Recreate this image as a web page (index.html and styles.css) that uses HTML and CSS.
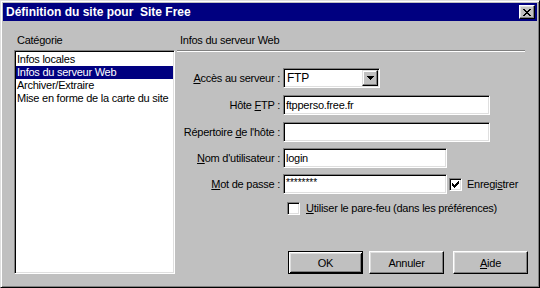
FILE: index.html
```html
<!DOCTYPE html>
<html lang="fr">
<head>
<meta charset="utf-8">
<title>Définition du site</title>
<link rel="stylesheet" href="styles.css">
</head>
<body>
<div class="window">
  <div class="titlebar">
    <span class="title">Définition du site pour  Site Free</span>
    <div class="close">
      <svg width="8" height="7" viewBox="0 0 8 7" shape-rendering="crispEdges"><path fill="#000" d="M0 0h2v1H0zM6 0h2v1H6zM1 1h2v1H1zM5 1h2v1H5zM2 2h4v1H2zM3 3h2v1H3zM2 4h4v1H2zM1 5h2v1H1zM5 5h2v1H5zM0 6h2v1H0zM6 6h2v1H6z"/></svg>
    </div>
  </div>
  <div class="content">
    <div class="left">
      <div class="caption">Catégorie</div>
      <ul class="list">
        <li>Infos locales</li>
        <li class="sel">Infos du serveur Web</li>
        <li>Archiver/Extraire</li>
        <li>Mise en forme de la carte du site</li>
      </ul>
    </div>
    <div class="right">
      <div class="caption">Infos du serveur Web</div>
      <div class="sep"></div>
      <div class="form">
        <div class="lbl"><u>A</u>ccès au serveur :</div>
        <div class="select"><span class="seltext">FTP</span><div class="drop"><svg width="7" height="4" viewBox="0 0 7 4" shape-rendering="crispEdges"><path fill="#000" d="M0 0h7v1H0zM1 1h5v1H1zM2 2h3v1H2zM3 3h1v1H3z"/></svg></div></div>

        <div class="lbl">Hôte <u>F</u>TP :</div>
        <div class="field w-long">ftpperso.free.fr</div>

        <div class="lbl">Répertoire <u>d</u>e l'hôte :</div>
        <div class="field w-long"></div>

        <div class="lbl"><u>N</u>om d'utilisateur :</div>
        <div class="field w-mid">login</div>

        <div class="lbl"><u>M</u>ot de passe :</div>
        <div class="inline">
          <div class="field w-mid pw">********</div>
          <div class="cb cb-save"><svg width="7" height="7" viewBox="0 0 7 7" shape-rendering="crispEdges"><path fill="#000" d="M6 0h1v1H6zM5 1h2v1H5zM0 2h1v1H0zM4 2h3v1H4zM0 3h2v1H0zM3 3h3v1H3zM0 4h5v1H0zM1 5h3v1H1zM2 6h1v1H2z"/></svg></div>
          <span class="cblabel">Enregi<u>s</u>trer</span>
        </div>

        <div></div>
        <div class="inline">
          <div class="cb cb-fw"></div>
          <span class="cblabel fw"><u>U</u>tiliser le pare-feu (dans les préférences)</span>
        </div>
      </div>
      <div class="buttons">
        <div class="btn default">OK</div>
        <div class="btn b-cancel">Annuler</div>
        <div class="btn b-help"><u>A</u>ide</div>
      </div>
    </div>
  </div>
</div>
</body>
</html>
```
FILE: styles.css
```css
html, body {
  margin: 0;
  padding: 0;
  background: #c0c0c0;
}

.window {
  width: 540px;
  height: 288px;
  box-sizing: border-box;
  background: #c0c0c0;
  border: 1px solid;
  border-color: #dfdfdf #000 #000 #dfdfdf;
  box-shadow: inset 1px 1px #fff, inset -1px -1px #808080;
  padding: 2px;
  display: flex;
  flex-direction: column;
  font-family: "Liberation Sans", Arial, sans-serif;
  font-size: 11px;
  letter-spacing: -0.25px;
  color: #000;
}

.titlebar {
  height: 18px;
  background: #000080;
  display: flex;
  align-items: flex-start;
  flex: none;
}

.title {
  flex: 1;
  color: #fff;
  font-weight: bold;
  font-size: 12px;
  letter-spacing: 0;
  line-height: 18px;
  padding-left: 3px;
  white-space: pre;
}

.close {
  width: 16px;
  height: 14px;
  margin: 2px 2px 0 0;
  box-sizing: border-box;
  background: #c0c0c0;
  border: 1px solid;
  border-color: #fff #000 #000 #fff;
  box-shadow: inset -1px -1px #808080, inset 1px 1px #dfdfdf;
  display: flex;
  align-items: center;
  justify-content: center;
}

.content {
  flex: 1;
  display: flex;
  padding: 13px 0 0 11px;
}

.left {
  width: 161px;
  display: flex;
  flex-direction: column;
}

.caption {
  height: 13px;
  line-height: 13px;
  padding-left: 3px;
  white-space: nowrap;
}

.list {
  margin: 3px 0 0;
  height: 224px;
  box-sizing: border-box;
  list-style: none;
  background: #fff;
  border: 1px solid;
  border-color: #808080 #fff #fff #808080;
  box-shadow: inset 1px 1px #000, inset -1px -1px #dfdfdf;
  padding: 2px 1px;
}

.list li {
  height: 13px;
  line-height: 13px;
  padding-left: 1px;
  white-space: nowrap;
}

.list li.sel {
  background: #000080;
  color: #fff;
}

.right {
  width: 351px;
  margin-left: 2px;
  display: flex;
  flex-direction: column;
}

.sep {
  margin: 3px 3px 0 0;
  border-top: 1px solid #808080;
  border-bottom: 1px solid #fff;
}

.form {
  margin-top: 16px;
  display: grid;
  grid-template-columns: 103px auto;
  grid-template-rows: 27px 27px 26px 26px 28px 13px;
  column-gap: 3px;
  align-items: start;
}

.lbl {
  text-align: right;
  line-height: 20px;
  white-space: nowrap;
}

.field {
  height: 20px;
  box-sizing: border-box;
  background: #fff;
  border: 1px solid;
  border-color: #808080 #fff #fff #808080;
  box-shadow: inset 1px 1px #000, inset -1px -1px #dfdfdf;
  padding: 0 2px;
  line-height: 18px;
  white-space: nowrap;
}

.w-long { width: 207px; }
.w-mid { width: 164px; }

.pw {
  font-size: 10px;
  line-height: 15px;
  letter-spacing: 0;
}

.select {
  width: 97px;
  height: 20px;
  box-sizing: border-box;
  background: #fff;
  border: 1px solid;
  border-color: #808080 #fff #fff #808080;
  box-shadow: inset 1px 1px #000, inset -1px -1px #dfdfdf;
  padding: 1px;
  display: flex;
}

.seltext {
  flex: 1;
  padding-left: 2px;
  line-height: 16px;
  font-size: 12px;
}

.drop {
  width: 16px;
  height: 16px;
  box-sizing: border-box;
  background: #c0c0c0;
  border: 1px solid;
  border-color: #dfdfdf #000 #000 #dfdfdf;
  box-shadow: inset -1px -1px #808080, inset 1px 1px #fff;
  display: flex;
  align-items: center;
  justify-content: center;
}

.inline {
  display: flex;
  align-items: center;
  white-space: nowrap;
}

.cb {
  width: 13px;
  height: 13px;
  box-sizing: border-box;
  background: #fff;
  border: 1px solid;
  border-color: #808080 #fff #fff #808080;
  box-shadow: inset 1px 1px #000, inset -1px -1px #dfdfdf;
  display: flex;
  align-items: center;
  justify-content: center;
  flex: none;
}

.cb-save { margin-left: 2px; }
.cb-fw { margin-left: 4px; }

.cblabel {
  margin-left: 5px;
  line-height: 13px;
}

.cblabel.fw { margin-left: 6px; }

.buttons {
  display: flex;
  margin-top: 36px;
  padding-left: 111px;
}

.btn {
  width: 75px;
  height: 23px;
  box-sizing: border-box;
  background: #c0c0c0;
  border: 1px solid;
  border-color: #fff #000 #000 #fff;
  box-shadow: inset -1px -1px #808080, inset 1px 1px #dfdfdf;
  display: flex;
  align-items: center;
  justify-content: center;
  flex: none;
}

.btn.default {
  border-color: #000;
  box-shadow: inset 1px 1px #fff, inset -1px -1px #000, inset 2px 2px #dfdfdf, inset -2px -2px #808080;
}

.b-cancel { margin-left: 6px; }
.b-help { margin-left: 9px; }
```
